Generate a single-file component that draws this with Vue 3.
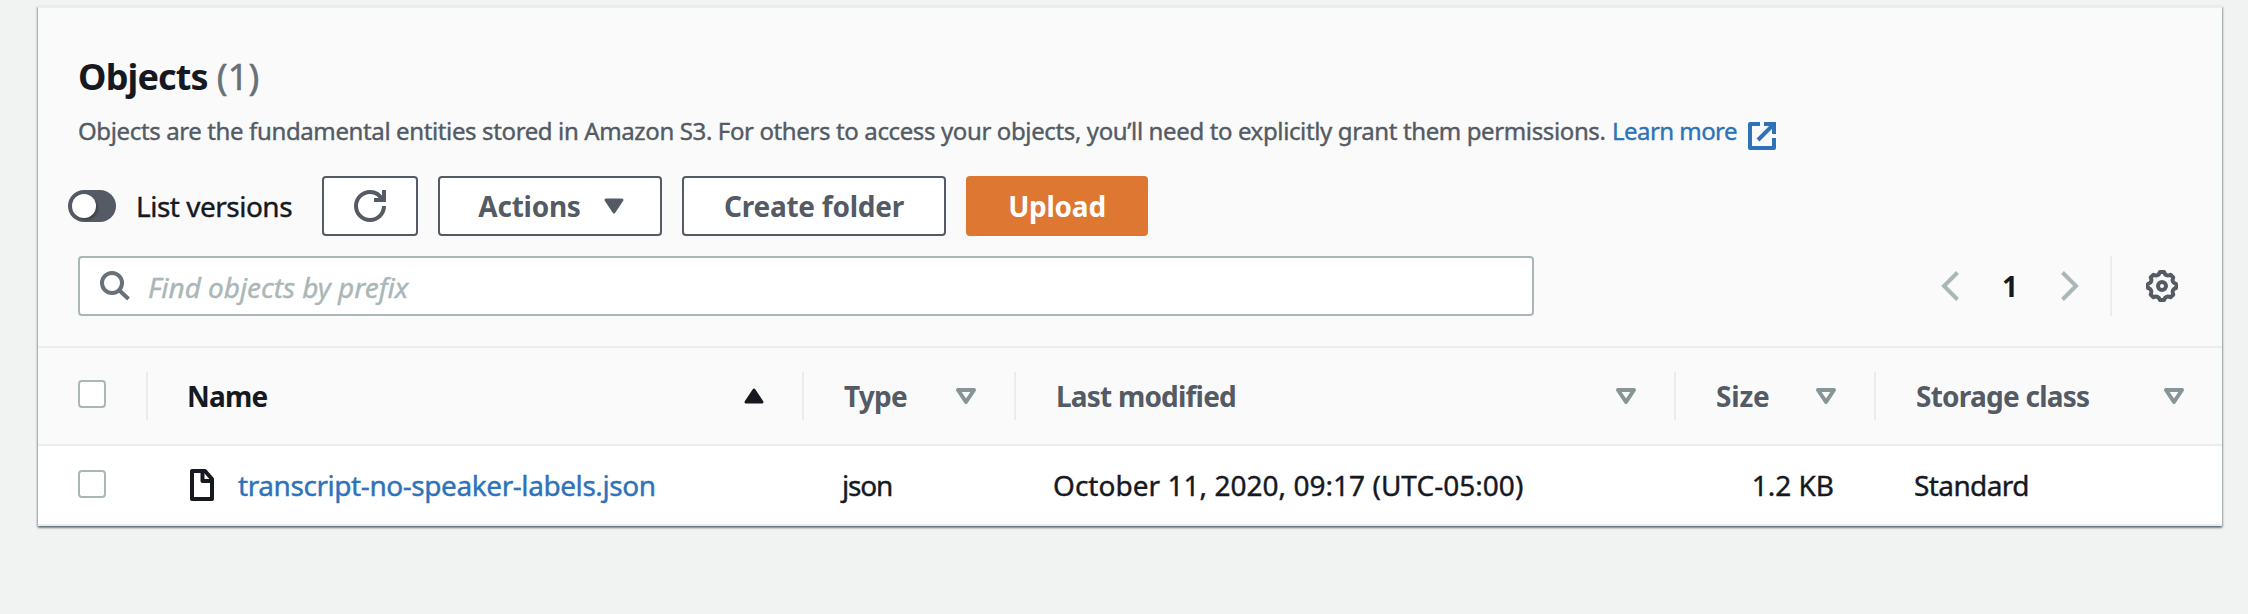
<script setup>
const columns = [
  { key: 'name', label: 'Name', sort: 'asc' },
  { key: 'type', label: 'Type', sort: 'none' },
  { key: 'modified', label: 'Last modified', sort: 'none' },
  { key: 'size', label: 'Size', sort: 'none' },
  { key: 'storage', label: 'Storage class', sort: 'none' },
]
const rows = [
  {
    name: 'transcript-no-speaker-labels.json',
    type: 'json',
    modified: 'October 11, 2020, 09:17 (UTC-05:00)',
    size: '1.2 KB',
    storage: 'Standard',
  },
]
</script>

<template>
  <main class="page">
    <section class="panel">
      <header class="head">
        <h2 class="title"><span class="title-text">Objects</span><span class="count">(1)</span></h2>
        <p class="desc">
          <span class="desc-text">Objects are the fundamental entities stored in Amazon S3. For others to access your objects, you’ll need to explicitly grant them permissions.</span>
          <a class="learn">Learn more</a>
          <svg class="ext" viewBox="0 0 28 28" fill="none" stroke="#2e73b8" stroke-width="4">
            <path d="M12 2H2v24h24V16" stroke-linejoin="round" />
            <path d="M16 2h10v10M26 2L10 18" />
          </svg>
        </p>
        <div class="actions">
          <span class="toggle"><i class="knob"></i></span>
          <span class="toggle-label">List versions</span>
          <button class="btn refresh">
            <svg viewBox="0 0 32 32" width="32" height="32" fill="none" stroke="#545b64" stroke-width="4">
              <path d="M20 10h10V0" />
              <path d="M30 16A14 14 0 1 1 16 2c5.500 0 10 3 12.300 8" />
            </svg>
          </button>
          <button class="btn menu"><span>Actions</span>
            <svg viewBox="0 0 20 16" width="20" height="16"><path d="M2 2h16l-8 12z" fill="#545b64" stroke="#545b64" stroke-width="3" stroke-linejoin="round" /></svg>
          </button>
          <button class="btn create">Create folder</button>
          <button class="btn primary">Upload</button>
        </div>
        <div class="tools">
          <div class="search">
            <svg viewBox="0 0 30 30" width="30" height="30" fill="none" stroke="#687078" stroke-width="4">
              <circle cx="12" cy="12" r="10" /><path d="M19 19l9.500 9" />
            </svg>
            <span class="placeholder">Find objects by prefix</span>
          </div>
          <nav class="pager">
            <svg viewBox="0 0 18 30" width="18" height="30" fill="none" stroke="#aab7b8" stroke-width="4"><path d="M16.500 1.500L3 15l13.500 13.500" /></svg>
            <b class="num">1</b>
            <svg viewBox="0 0 18 30" width="18" height="30" fill="none" stroke="#aab7b8" stroke-width="4"><path d="M1.500 1.500L15 15 1.500 28.500" /></svg>
          </nav>
          <div class="prefs">
            <svg viewBox="-16 -16 32 32" width="32" height="32" fill="none" stroke="#545b64" stroke-width="4" stroke-linejoin="round">
              <path d="M-2-14H2Q3.700-9 8.500-11.300L11.300-8.500Q9-3.700 14-2V2Q9 3.700 11.300 8.500L8.500 11.300Q3.700 9 2 14H-2Q-3.700 9-8.500 11.300L-11.300 8.500Q-9 3.700-14 2V-2Q-9-3.700-11.300-8.500L-8.500-11.300Q-3.700-9-2-14z" />
              <circle r="4" />
            </svg>
          </div>
        </div>
      </header>
      <div class="row thead">
        <div class="cell check"><i class="box"></i></div>
        <div v-for="c in columns" :key="c.key" class="cell" :class="[c.key, { sorted: c.sort === 'asc' }]">
          <span class="label">{{ c.label }}</span>
          <svg v-if="c.sort === 'asc'" viewBox="0 0 20 16" width="20" height="16"><path d="M2 14h16L10 2z" fill="#16191f" stroke="#16191f" stroke-width="3" stroke-linejoin="round" /></svg>
          <svg v-else viewBox="0 0 20 16" width="20" height="16"><path d="M2 2h16l-8 12z" fill="none" stroke="#879596" stroke-width="4" stroke-linejoin="round" /></svg>
        </div>
      </div>
      <div v-for="r in rows" :key="r.name" class="row item">
        <div class="cell check"><i class="box"></i></div>
        <div class="cell name">
          <svg viewBox="0 0 24 32" width="24" height="32" fill="none" stroke="#16191f" stroke-width="4" stroke-linejoin="round">
            <path d="M2 2h13l7 8v20H2z" /><path d="M12.500 2v10H22" />
          </svg>
          <a class="file">{{ r.name }}</a>
        </div>
        <div class="cell type">{{ r.type }}</div>
        <div class="cell modified">{{ r.modified }}</div>
        <div class="cell size">{{ r.size }}</div>
        <div class="cell storage">{{ r.storage }}</div>
      </div>
    </section>
  </main>
</template>

<style>
html, body { margin: 0; background: #f2f3f3; overflow: hidden; }
</style>
<style scoped>
* { box-sizing: border-box; }
svg { display: block; flex: none; overflow: visible; }
.page {
  height: 614px; padding: 6px 26px 0 38px; background: #f1f3f3; color: #16191f;
  font: 400 28px/40px "Noto Sans", "Open Sans", sans-serif; white-space: nowrap;
}
.panel {
  width: 2184px; height: 520px; background: #fff; border-top: 2px solid #eaeded;
  box-shadow: 0 2px 2px 0 rgba(0, 28, 36, .4), 1px 1px 2px 0 rgba(0, 28, 36, .25), -1px 1px 2px 0 rgba(0, 28, 36, .25);
}
.head { height: 340px; padding: 44px 38px 0 40px; background: #fafafa; border-bottom: 2px solid #eaeded; }
.title { display: flex; gap: 9px; margin: 0; font-size: 36px; line-height: 50px; height: 50px; }
.title-text { letter-spacing: -.85px; }
.count { font-weight: 400; color: #687078; letter-spacing: .2px; -webkit-text-stroke: .5px; }
.desc { display: flex; margin: 11px 0 0; height: 36px; font-size: 24px; line-height: 36px; color: #545b64; -webkit-text-stroke: .4px; }
.desc-text { letter-spacing: -.375px; width: 1534px; }
.learn { color: #2e73b8; letter-spacing: -.55px; width: 136px; }
.ext { width: 28px; height: 28px; margin-top: 9px; }
.actions { display: flex; align-items: center; height: 60px; margin: 27px 0 0 -10px; }
.toggle { width: 48px; height: 32px; border-radius: 16px; background: #545b64; padding: 4px; }
.knob { display: block; width: 24px; height: 24px; border-radius: 50%; background: #fff; box-shadow: 2px 2px 2px rgba(0, 0, 0, .25); }
.toggle-label { width: 186px; margin-left: 20px; letter-spacing: -.5px; -webkit-text-stroke: .4px; }
.btn {
  display: flex; align-items: center; justify-content: center; height: 60px; margin: 0 20px 0 0; padding: 0;
  border: 2px solid #545b64; border-radius: 4px; background: #fff; color: #545b64;
  font: 700 28px/40px "Noto Sans", "Open Sans", sans-serif; letter-spacing: -.25px;
}
.refresh { width: 96px; }
.menu { width: 224px; gap: 23px; padding-left: 2px; }
.create { width: 264px; }
.primary { width: 182px; margin: 0; background: #dd7732; border-color: #dd7732; color: #fff; }
.tools { display: flex; align-items: center; height: 60px; margin-top: 20px; }
.search { display: flex; align-items: center; width: 1456px; height: 60px; padding-left: 20px; border: 2px solid #aab7b8; border-radius: 4px; background: #fff; }
.placeholder { margin: 2px 0 0 18px; font-style: italic; color: #aab7b8; letter-spacing: -.05px; -webkit-text-stroke: .4px; }
.pager { display: flex; align-items: center; margin-left: 407px; width: 169px; }
.num { width: 102px; text-align: center; }
.prefs { display: flex; align-items: center; height: 60px; padding-left: 34px; border-left: 2px solid #eaeded; }
.row { display: flex; align-items: center; }
.thead { height: 98px; background: #fafafa; border-bottom: 2px solid #eaeded; font-weight: 700; color: #545b64; }
.item { height: 80px; border-bottom: 2px solid #eaeded; -webkit-text-stroke: .4px; }
.cell { display: flex; align-items: center; }
.thead .cell { height: 48px; justify-content: space-between; padding: 0 38px 0 40px; border-right: 2px solid #eaeded; }
.thead .cell:last-child { border-right: 0; }
.label { letter-spacing: -.8px; margin-top: -1px; }
.sorted { color: #16191f; }
.cell.check { width: 110px; padding-left: 40px; }
.box { width: 28px; height: 28px; margin-top: -4px; border: 2px solid #aab7b8; border-radius: 4px; background: #fff; }
.item .box { margin-top: -2px; }
.cell.name { width: 656px; padding-left: 42px; }
.thead .name { padding-left: 39px; }
.cell.type { width: 212px; padding-left: 40px; }
.cell.modified { width: 660px; padding-left: 40px; }
.cell.size { width: 200px; padding-left: 40px; }
.thead .size .label { letter-spacing: -.2px; }
.thead .storage .label { letter-spacing: -.75px; }
.cell.storage { width: 346px; padding-left: 40px; }
.item .type { padding-left: 38px; letter-spacing: -1.2px; }
.item .modified { padding-left: 37px; letter-spacing: .03px; }
.item .size { justify-content: flex-end; padding-right: 42px; }
.item .storage { padding-left: 38px; letter-spacing: -.6px; }
.file { margin-left: 24px; color: #2e73b8; letter-spacing: -.43px; }
</style>
